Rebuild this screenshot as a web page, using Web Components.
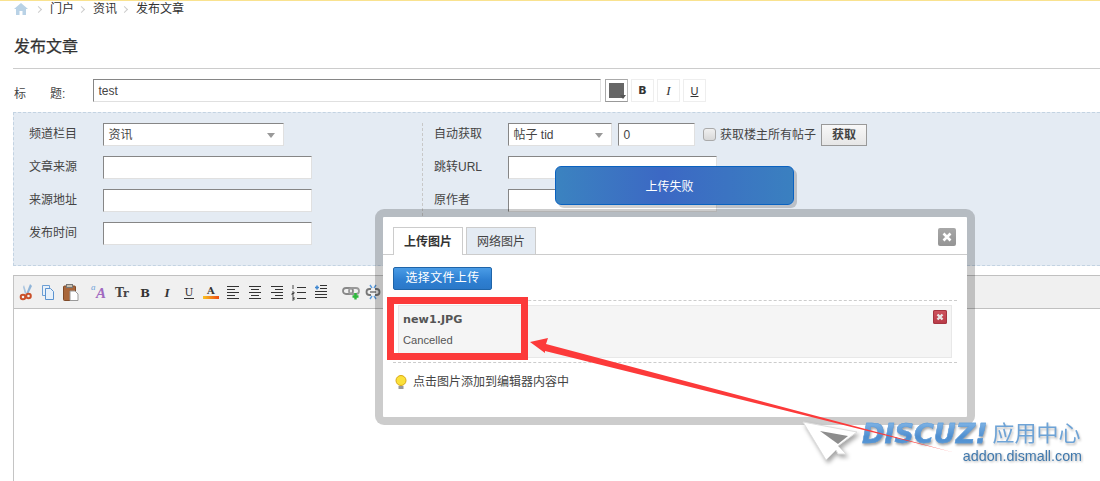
<!DOCTYPE html>
<html lang="zh">
<head>
<meta charset="utf-8">
<title>发布文章</title>
<style>
  html, body { margin: 0; height: 481px; overflow: hidden; background: #fff; }
  body { font: 12px/16px "Liberation Sans", "Noto Sans CJK SC", sans-serif; color: #444; }
</style>
</head>
<body>
<article-page></article-page>

<script>
const sheet = (css, html) => `<style>${css}</style>${html}`;

class BaseElement extends HTMLElement {
  constructor() {
    super();
    this.attachShadow({ mode: 'open' });
    this.shadowRoot.innerHTML = sheet(this.constructor.css, this.constructor.html);
  }
}

class TextBox extends BaseElement {
  static css = `
    :host {
      display: block; box-sizing: border-box; width: 209px; height: 23px; padding: 0 4px 0 4.500px;
      background: #fff; border: 1px solid; border-color: #868686 #e0e0e0 #e0e0e0 #868686;
      line-height: 22px; color: #444; position: relative;
    }
    :host([arrow])::after {
      content: ''; position: absolute; right: 8px; top: 9px;
      border: 4px solid transparent; border-top: 5px solid #999; border-bottom: 0;
    }`;
  static html = `<slot></slot>`;
}

class FormRow extends BaseElement {
  static css = `
    :host { display: flex; align-items: flex-start; height: 23px; }
    .label { width: 74px; flex: none; line-height: 22px; color: #444; }
    .fields { display: flex; align-items: flex-start; }`;
  static html = `<div class="label"><slot name="label"></slot></div><div class="fields"><slot></slot></div>`;
}

class StyleButtons extends BaseElement {
  static css = `
    :host { display: flex; gap: 3px; margin-left: 4px; }
    .b {
      box-sizing: border-box; width: 23px; height: 23px; border: 1px solid #eee; text-align: center;
      line-height: 22px; font-size: 12px; color: #333;
    }
    .color { position: relative; border-color: #aaa #bbb #999 #aaa; margin-right: 0; }
    .color i { position: absolute; left: 3px; top: 3px; width: 15px; height: 15px; background: #666; }
    .color b { position: absolute; right: 1px; bottom: 2px; border: 3px solid transparent; border-top: 4px solid #555; border-bottom: 0; }`;
  static html = `
    <div class="b color"><i></i><b></b></div>
    <div class="b" style="font-weight:700;font-family:'DejaVu Sans';font-size:11px">B</div>
    <div class="b" style="font-style:italic;font-family:'Liberation Serif';font-size:13px">I</div>
    <div class="b" style="text-decoration:underline;font-size:11px">U</div>`;
}

class PublishPanel extends BaseElement {
  static css = `
    :host {
      display: grid; grid-template-columns: 408px 1fr; box-sizing: border-box; height: 154px;
      margin-left: 13px; padding: 10px 0 0; background: #e4ebf3;
      border: 1px dashed #c3d3e2; border-right: 0;
    }
    .col { display: flex; flex-direction: column; gap: 10px; }
    .left { padding-left: 15px; }
    .right { padding-left: 11px; border-left: 1px dashed #c8c8c8; height: 128px; }
    .check {
      box-sizing: border-box; width: 13px; height: 13px; margin: 5px 5px 0 8px; border: 1px solid #aaa;
      border-radius: 3px; background: linear-gradient(#f0f0f0, #d8d8d8);
    }
    .check-label { line-height: 24px; margin-right: 5px; margin-left: -1px; color: #444; white-space: nowrap; }
    .fetch {
      box-sizing: border-box; width: 46px; height: 22px; margin-top: 1px; border: 1px solid #999;
      background: linear-gradient(#f8f8f8, #e6e6e6); text-align: center; line-height: 21px;
      font-weight: 700; color: #444;
    }`;
  static html = `
    <div class="col left">
      <form-row><span slot="label">频道栏目</span><text-box arrow style="width:181px">资讯</text-box></form-row>
      <form-row><span slot="label">文章来源</span><text-box></text-box></form-row>
      <form-row><span slot="label">来源地址</span><text-box></text-box></form-row>
      <form-row><span slot="label">发布时间</span><text-box></text-box></form-row>
    </div>
    <div class="col right">
      <form-row><span slot="label">自动获取</span>
        <text-box arrow style="width:104px">帖子 tid</text-box>
        <text-box style="width:77px;margin-left:6px">0</text-box>
        <div class="check"></div><div class="check-label">获取楼主所有帖子</div>
        <div class="fetch">获取</div>
      </form-row>
      <form-row><span slot="label">跳转URL</span><text-box></text-box></form-row>
      <form-row><span slot="label">原作者</span><text-box></text-box></form-row>
    </div>`;
}

const line = (d, w = 1, c = '#333') => `<path d="${d}" fill="none" stroke="${c}" stroke-width="${w}"/>`;
const rows = (items) => items.map(([x1, x2, y]) => `M${x1} ${y}H${x2}`).join('');
const ICONS = {
  cut: `<path d="M11 0 7.500 9l1.600 1L13 2z" fill="#8fb4d8"/><path d="M5 1l2.500 8-1.600 1L4 3z" fill="#a9c4de"/>
        <circle cx="4" cy="13" r="2.300" fill="none" stroke="#c9502a" stroke-width="2"/>
        <circle cx="9.500" cy="12" r="2.300" fill="none" stroke="#c9502a" stroke-width="2"/>`,
  copy: `<path d="M1.500 1.500h7v10h-7z" fill="#e8f1fa" stroke="#6d9fd4"/><path d="M4.500 4.500h5l3 3v8h-8z" fill="#e8f1fa" stroke="#5b93d0"/>`,
  paste: `<rect x="0.500" y="2" width="12" height="14.500" rx="1" fill="#a9663a" stroke="#7f4a28"/><rect x="3.500" y="0.500" width="6" height="3" fill="#c9c0b0" stroke="#777"/>
          <path d="M7 7h5l3 3v6.500H7z" fill="#fff" stroke="#999"/>`,
  bold: `<text x="8" y="13" text-anchor="middle" font-family="DejaVu Serif" font-weight="700" font-size="11.500" fill="#333">B</text>`,
  italic: `<text x="8" y="13" text-anchor="middle" font-family="Liberation Serif" font-weight="700" font-style="italic" font-size="13" fill="#333">I</text>`,
  under: `<text x="8" y="12" text-anchor="middle" font-family="DejaVu Serif" font-size="10.500" fill="#333">U</text>${line('M3 14.500h10')}`,
  font: `<text x="-2" y="6" font-family="Liberation Serif" font-style="italic" font-size="9" fill="#6fa0d8">a</text>
         <text x="3" y="14" font-family="Liberation Serif" font-weight="700" font-style="italic" font-size="15" fill="#a069c0">A</text>`,
  size: `<text x="0" y="13" font-family="DejaVu Serif" font-weight="700" font-size="12" fill="#444">T</text>
         <text x="8" y="13" font-family="DejaVu Serif" font-weight="700" font-size="11" fill="#444">r</text>`,
  color: `<text x="8" y="10" text-anchor="middle" font-family="DejaVu Serif" font-weight="700" font-size="10" fill="#333">A</text>
          <defs><linearGradient id="fc"><stop offset="0" stop-color="#f9c322"/><stop offset="1" stop-color="#ee4a14"/></linearGradient></defs>
          <rect x="0" y="12" width="16" height="3" fill="url(#fc)"/>`,
  left: line(rows([[2, 14, 2.500], [2, 10, 5.500], [2, 14, 8.500], [2, 10, 11.500], [2, 14, 14.500]])),
  center: line(rows([[2, 14, 2.500], [4, 12, 5.500], [2, 14, 8.500], [4, 12, 11.500], [2, 14, 14.500]])),
  right: line(rows([[2, 14, 2.500], [6, 14, 5.500], [2, 14, 8.500], [6, 14, 11.500], [2, 14, 14.500]])),
  list: `<path d="M2 1v4M1 8h2v1.500H1V11h2M1 13h2v1.500H1.500M3 14.500V16H1" fill="none" stroke="#333" stroke-width=".9"/>
         ${line(rows([[6, 15, 3.500], [6, 15, 8.500], [6, 15, 14.500]]))}`,
  indent: `<path d="M2 3.500h4M4 1.500v4" stroke="#3f87d0" stroke-width="1.600" fill="none"/>
           ${line(rows([[7, 14, 1.500], [7, 14, 4.500], [2, 14, 7.500], [2, 14, 10.500], [2, 14, 13.500]]))}`,
  link: `<rect x="0" y="4" width="10" height="6" rx="3" fill="none" stroke="#888" stroke-width="1.800"/>
         <rect x="6" y="4" width="10" height="6" rx="3" fill="none" stroke="#999" stroke-width="1.800"/>
         <path d="M12.500 9v6.500M9.500 12.500h6" stroke="#2eb83c" stroke-width="2.400"/>`,
  unlink: `<path d="M6 5H4.500a2.800 2.800 0 0 0 0 6H6M10 5h1.500a2.800 2.800 0 0 1 0 6H10" fill="none" stroke="#777" stroke-width="1.800"/>
           <path d="M5 8h6" stroke="#777" stroke-width="1.500"/>
           <path d="M5 1l2 3M11 1 9 4M5 15l2-3M11 15l-2-3" stroke="#5b9bdc" stroke-width="1.400"/>`
};

class ToolIcon extends HTMLElement {
  constructor() {
    super();
    this.attachShadow({ mode: 'open' });
  }
  connectedCallback() {
    this.shadowRoot.innerHTML = sheet(
      `:host { display: flex; width: 22px; height: 32px; align-items: center; justify-content: center; }
       svg { display: block; overflow: visible; }`,
      `<svg width="16" height="16" viewBox="0 0 16 16">${ICONS[this.getAttribute('name')]}</svg>`
    );
  }
}

class EditorBox extends BaseElement {
  static css = `
    :host { display: block; margin: 9px 0 0 13px; height: 206px; border-left: 1px solid #c4c4c4; border-top: 1px solid #c0c0c0; }
    .bar { display: flex; height: 32px; padding-left: 2px; background: #f0f0f0; border-bottom: 1px solid #c0c0c0; }
    .gap { width: 8px; }`;
  static html = `
    <div class="bar">
      <tool-icon name="cut"></tool-icon><tool-icon name="copy"></tool-icon><tool-icon name="paste"></tool-icon>
      <div class="gap"></div>
      <tool-icon name="font"></tool-icon><tool-icon name="size"></tool-icon><tool-icon name="bold"></tool-icon>
      <tool-icon name="italic"></tool-icon><tool-icon name="under"></tool-icon><tool-icon name="color"></tool-icon>
      <tool-icon name="left"></tool-icon><tool-icon name="center"></tool-icon><tool-icon name="right"></tool-icon>
      <tool-icon name="list"></tool-icon><tool-icon name="indent"></tool-icon>
      <div class="gap"></div>
      <tool-icon name="link"></tool-icon><tool-icon name="unlink"></tool-icon>
    </div>`;
}

class UploadToast extends BaseElement {
  static css = `
    :host {
      position: absolute; left: 555px; top: 166px; box-sizing: border-box; width: 239px; height: 39px;
      padding: 2px 10px 0 0;
      border: 1px solid #0a62c0; border-radius: 6px; color: #fff; text-align: center; line-height: 37px;
      background: linear-gradient(90deg, #3b83c0, #3c68c4 45%, #3a80c0);
      box-shadow: 3px 3px 0 rgba(0, 0, 0, .18);
    }`;
  static html = `<slot></slot>`;
}

class ImageDialog extends BaseElement {
  static css = `
    :host {
      position: absolute; left: 375px; top: 209px; box-sizing: border-box; width: 600px; height: 216px;
      border: 8px solid rgba(0, 0, 0, .2); border-radius: 9px; background: #fff; background-clip: padding-box;
      display: flex; flex-direction: column;
    }
    .tabs { display: flex; gap: 3px; height: 27px; padding: 10px 10px 0; border-bottom: 1px solid #ccc; position: relative; }
    .tab {
      box-sizing: border-box; width: 70px; height: 27px; text-align: center; line-height: 28px;
      border: 1px solid #ccc; border-bottom: 0; background: #e4ebf3; color: #444;
    }
    .tab.on { background: #fff; height: 28px; font-weight: 700; color: #333; }
    .close {
      position: absolute; right: 11px; top: 11px; width: 18px; height: 18px; border-radius: 2px;
      background: linear-gradient(#a8a8a8, #949494);
    }
    .close svg, .del svg { display: block; }
    .upload {
      box-sizing: border-box; width: 99px; height: 23px; margin: 12px 0 0 10px; border: 1px solid #1f64a8;
      border-radius: 2px; color: #fff; text-align: center; line-height: 20px; letter-spacing: .35px;
      background: linear-gradient(#4a9ce6, #2f80d2 55%, #2a78c8);
    }
    .files {
      margin: 10px 10px 0; padding: 4px 5px; height: 53px;
      border-top: 1px dashed #ccc; border-bottom: 1px dashed #ccc;
    }
    .file {
      box-sizing: border-box; height: 53px; padding: 4px 4px; background: #f5f5f5; border: 1px solid #e8e8e8;
      position: relative;
    }
    .name { font-weight: 700; font-family: "DejaVu Sans", sans-serif; font-size: 11.200px; line-height: 20px; color: #555; }
    .status { font-size: 11.200px; line-height: 20px; color: #555; }
    .del {
      position: absolute; right: 4px; top: 4px; width: 14px; height: 14px; border-radius: 2px;
      background: linear-gradient(#cf5560, #b83a46); box-shadow: inset 0 0 0 1px #a53540;
    }
    .hint { display: flex; align-items: center; gap: 6px; margin: 11px 0 0 12px; color: #444; }`;
  static html = `
    <div class="tabs">
      <div class="tab on">上传图片</div><div class="tab">网络图片</div>
      <div class="close"><svg width="18" height="18"><path d="M5.500 5.500l7 7M12.500 5.500l-7 7" stroke="#fff" stroke-width="2.600"/></svg></div>
    </div>
    <div class="upload">选择文件上传</div>
    <div class="files">
      <div class="file">
        <div class="name">new1.JPG</div>
        <div class="status">Cancelled</div>
        <div class="del"><svg width="14" height="14"><path d="M4.500 4.500l5 5M9.500 4.500l-5 5" stroke="#e8e8e8" stroke-width="2.400"/></svg></div>
      </div>
    </div>
    <div class="hint">
      <svg width="12" height="15" viewBox="0 0 12 15"><circle cx="6" cy="5.500" r="5" fill="#fbe13a" stroke="#d9a916"/><path d="M3.500 11h5v3h-5z" fill="#999"/></svg>
      <span>点击图片添加到编辑器内容中</span>
    </div>`;
}

class RedMarkup extends BaseElement {
  static css = `
    :host { position: absolute; left: 0; top: 0; width: 1100px; height: 481px; pointer-events: none; }
    svg { display: block; }`;
  static html = `
    <svg width="1100" height="481">
      <rect x="390.500" y="300.500" width="134" height="56" fill="none" stroke="#fc3a3a" stroke-width="7"/>
      <path d="M530 342 548 338 546 344 952 452 545 351 545 353z" fill="#fc3a3a"/>
    </svg>`;
}

class DiscuzMark extends BaseElement {
  static css = `
    :host { position: absolute; left: 802px; top: 420px; width: 285px; height: 50px; display: block; }
    svg { position: absolute; left: 0; top: 0; filter: drop-shadow(2px 3px 2px rgba(0, 0, 0, .35)); }
    .top { display: flex; position: absolute; left: 60px; top: 0; height: 28px; align-items: center; white-space: nowrap; }
    .brand {
      font: italic 700 27px/28px "DejaVu Sans", sans-serif;
      background: linear-gradient(#86b9e8, #4f8fd0 60%, #5b9ad8); -webkit-background-clip: text; background-clip: text;
      color: transparent; filter: drop-shadow(1px 2px 1px rgba(0, 0, 0, .35)); -webkit-text-stroke: .4px #5b9ad8;
    }
    .center { margin-left: 5px; font-size: 22px; line-height: 26px; color: #6ea3d6; filter: drop-shadow(1px 2px 1px rgba(0, 0, 0, .25)); }
    .site {
      position: absolute; right: 5px; top: 27px; font-size: 14.300px; line-height: 18px; color: #3f78ad;
      filter: drop-shadow(1px 1px 1px rgba(0, 0, 0, .3));
    }`;
  static html = `
    <svg width="62" height="44" viewBox="0 0 62 44">
      <path d="M1 2 55 12 36 26 44 34 36 34 34 30 24 40z" fill="#fff" stroke="#ddd"/>
      <path d="M18 11 46 16 36 24z" fill="#8d8d8d"/>
    </svg>
    <div class="top"><span class="brand">DISCUZ!</span><span class="center">应用中心</span></div>
    <div class="site">addon.dismall.com</div>`;
}

class ArticlePage extends BaseElement {
  static css = `
    :host { display: block; position: relative; width: 1100px; height: 481px; overflow: hidden; }
    .stripe { height: 1px; background: #f9e28f; }
    .crumbs { display: flex; align-items: center; height: 14px; padding: 1px 0 0 14px; margin-bottom: -1px; color: #444; }
    .crumbs span { color: #333; }
    .crumbs i { width: 4px; height: 4px; margin: 0 9px 0 5px; border: solid #ccc; border-width: 1px 1px 0 0; transform: rotate(45deg); }
    h1 { margin: 22px 0 0 14px; font-size: 16px; line-height: 20px; font-weight: 400; color: #333; -webkit-text-stroke: .25px #333; }
    hr { margin: 11px 0 0 13px; border: 0; border-top: 1px solid #ccc; }
    .title { display: flex; align-items: flex-start; margin: 10px 0 10px 14px; height: 23px; }
    .title label { width: 79px; padding-top: 7px; line-height: 16px; color: #444; white-space: pre; }`;
  static html = `
    <div class="stripe"></div>
    <div class="crumbs">
      <svg width="14" height="12" viewBox="0 0 14 12"><path d="M7 0 0 6h2v6h3.500V8h3v4H12V6h2z" fill="#b9d2e6"/></svg>
      <i style="margin-left:8px"></i><span>门户</span><i></i><span>资讯</span><i></i><span>发布文章</span>
    </div>
    <h1>发布文章</h1>
    <hr>
    <div class="title">
      <label>标　　题:</label>
      <text-box style="width:508px">test</text-box>
      <style-buttons></style-buttons>
    </div>
    <publish-panel></publish-panel>
    <editor-box></editor-box>
    <upload-toast>上传失败</upload-toast>
    <image-dialog></image-dialog>
    <discuz-mark></discuz-mark>
    <red-markup></red-markup>`;
}

customElements.define('text-box', TextBox);
customElements.define('form-row', FormRow);
customElements.define('style-buttons', StyleButtons);
customElements.define('publish-panel', PublishPanel);
customElements.define('tool-icon', ToolIcon);
customElements.define('editor-box', EditorBox);
customElements.define('upload-toast', UploadToast);
customElements.define('image-dialog', ImageDialog);
customElements.define('red-markup', RedMarkup);
customElements.define('discuz-mark', DiscuzMark);
customElements.define('article-page', ArticlePage);
</script>
</body>
</html>
